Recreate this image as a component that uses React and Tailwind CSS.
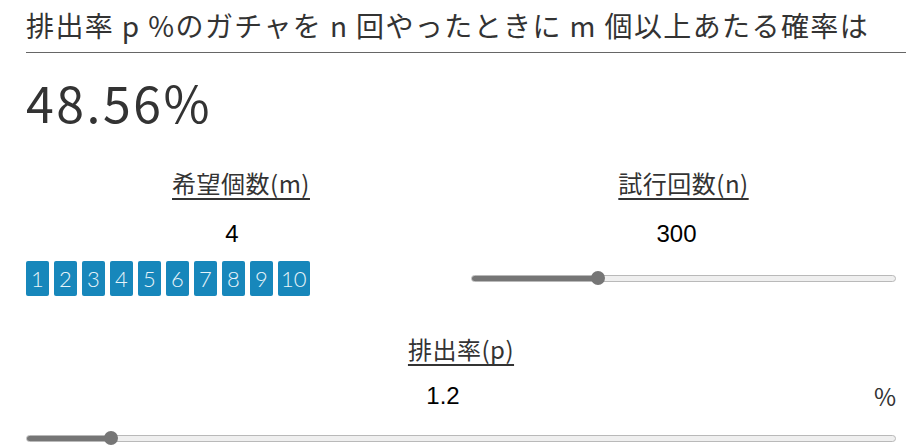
import React from 'react';

const jp = { fontFamily: '"Noto Sans CJK JP", "Noto Sans", sans-serif' };
const arial = { fontFamily: '"Liberation Sans", Arial, sans-serif' };

function Slider({ value, min, max }) {
  const pct = ((value - min) / (max - min)) * 100;
  return (
    <div className="relative h-[14px] w-full flex items-center">
      <div className="h-[7px] w-full rounded-full border border-[#b9b9b9] bg-[#efefef] overflow-hidden">
        <div className="h-full bg-[#767676]" style={{ width: `${pct}%` }} />
      </div>
      <div
        className="absolute top-0 h-[14px] w-[14px] -ml-[7px] rounded-full bg-[#767676]"
        style={{ left: `${pct}%` }}
      />
    </div>
  );
}

function Label({ children }) {
  return (
    <div className="text-center text-[24px] leading-[30px] text-[#333] tracking-[0.5px]" style={jp}>
      <span className="underline decoration-[2px] underline-offset-[5px]">{children}</span>
    </div>
  );
}

export default function App() {
  const nums = [1, 2, 3, 4, 5, 6, 7, 8, 9, 10];
  return (
    <div className="w-[910px] h-[446px] overflow-hidden bg-white pl-[26px] pr-[4px] text-[#333]" style={jp}>
      <h1 className="pt-[6px] pb-[8px] text-[28px] leading-[38px] border-b border-[#666] tracking-[1.4px] whitespace-nowrap">
        排出率 p %のガチャを n 回やったときに m 個以上あたる確率は
      </h1>
      <div className="mt-[20px] text-[50px] leading-[56px] tracking-[2.5px]">48.56%</div>

      <div className="mt-[39px] flex pr-[10px]">
        <div className="w-[430px]">
          <Label>希望個数(m)</Label>
          <div className="mt-[22px] pr-[18px] text-center text-[24px] leading-[28px] text-black" style={arial}>
            4
          </div>
          <div className="mt-[13px] flex gap-[5px]">
            {nums.map((n) => (
              <div
                key={n}
                className="h-[35px] min-w-[23px] px-[3px] rounded-[2px] bg-[#1787bb] text-[#e8f4fa] text-[22px] font-light flex items-center justify-center"
                style={{ fontFamily: 'Lato, "Noto Sans", sans-serif' }}
              >
                {n}
              </div>
            ))}
          </div>
        </div>
        <div className="ml-[15px] flex-1">
          <Label>試行回数(n)</Label>
          <div className="mt-[22px] pr-[14px] text-center text-[24px] leading-[28px] text-black" style={arial}>
            300
          </div>
          <div className="mt-[23px]">
            <Slider value={300} min={1} max={1000} />
          </div>
        </div>
      </div>

      <div className="mt-[38px] pr-[10px]">
        <Label>排出率(p)</Label>
        <div className="mt-[18px] flex items-center text-[24px] leading-[28px] text-black" style={arial}>
          <div className="flex-1 text-center pr-[12px]">1.2</div>
          <div className="w-[24px] text-right text-[#333]" style={jp}>%</div>
        </div>
        <div className="mt-[21px]">
          <Slider value={1.2} min={0.1} max={11.3} />
        </div>
      </div>
    </div>
  );
}
